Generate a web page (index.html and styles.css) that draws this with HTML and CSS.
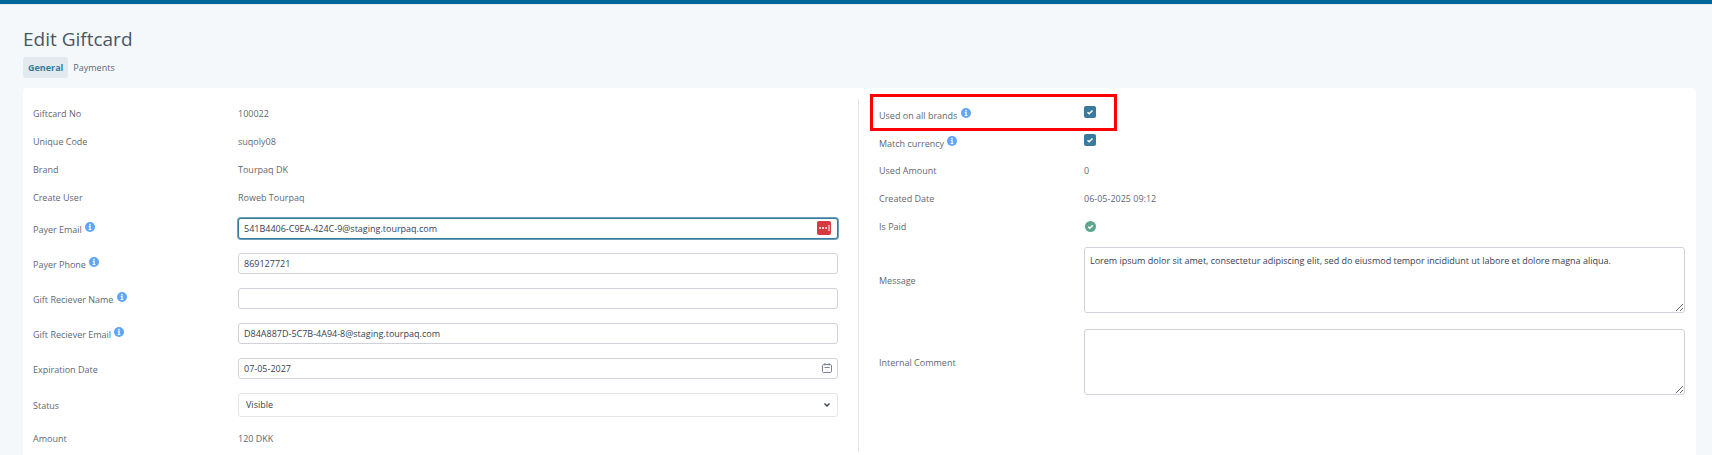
FILE: index.html
```html
<!DOCTYPE html>
<html lang="en">
<head>
<meta charset="utf-8">
<title>Edit Giftcard</title>
<link rel="stylesheet" href="styles.css">
</head>
<body>
<svg class="sprite" aria-hidden="true">
  <symbol id="info" viewBox="0 0 20 20">
    <circle cx="10" cy="10" r="10" fill="#60a5fa"/>
    <circle cx="10" cy="5.4" r="1.7" fill="#fff"/>
    <path d="M7.5 8.2h3.9v5.6h1.4v2H7.3v-2h1.6v-3.6H7.5z" fill="#fff"/>
  </symbol>
</svg>
<div class="topbar"></div>
<main class="page">
  <h1 class="title">Edit Giftcard</h1>
  <nav class="tabs">
    <a class="tab tab-active" href="#general">General</a>
    <a class="tab" href="#payments">Payments</a>
  </nav>
  <form class="card">
    <section class="column column-left">
      <div class="row"><span class="label">Giftcard No</span><span class="value">100022</span></div>
      <div class="row"><span class="label">Unique Code</span><span class="value">suqoly08</span></div>
      <div class="row"><span class="label">Brand</span><span class="value">Tourpaq DK</span></div>
      <div class="row"><span class="label">Create User</span><span class="value">Roweb Tourpaq</span></div>
      <div class="row row-field">
        <label class="label" for="email">Payer Email <svg class="info"><use href="#info"/></svg></label>
        <div class="field">
          <input class="input input-focused" id="email" type="text" value="541B4406-C9EA-424C-9@staging.tourpaq.com">
          <svg class="manager" viewBox="0 0 14 14" aria-hidden="true"><rect width="14" height="14" rx="2" fill="#d63a3e"/><circle cx="3" cy="7" r="1" fill="#fff"/><circle cx="6" cy="7" r="1" fill="#fff"/><circle cx="9" cy="7" r="1" fill="#fff"/><path d="M12 4v6" stroke="#fff"/></svg>
        </div>
      </div>
      <div class="row row-field">
        <label class="label" for="phone">Payer Phone <svg class="info"><use href="#info"/></svg></label>
        <div class="field"><input class="input" id="phone" type="text" value="869127721"></div>
      </div>
      <div class="row row-field">
        <label class="label" for="rname">Gift Reciever Name <svg class="info"><use href="#info"/></svg></label>
        <div class="field"><input class="input" id="rname" type="text"></div>
      </div>
      <div class="row row-field">
        <label class="label" for="remail">Gift Reciever Email <svg class="info"><use href="#info"/></svg></label>
        <div class="field"><input class="input" id="remail" type="text" value="D84A887D-5C7B-4A94-8@staging.tourpaq.com"></div>
      </div>
      <div class="row row-field">
        <label class="label" for="expires">Expiration Date</label>
        <div class="field">
          <input class="input" id="expires" type="text" value="07-05-2027">
          <svg class="calendar" viewBox="0 0 10 10" aria-hidden="true"><rect x=".5" y="1.5" width="9" height="8" rx="1.2" fill="none" stroke="#7b8490"/><path d="M3 0v2.5M7 0v2.5M2.5 4.5h5" stroke="#7b8490" fill="none"/></svg>
        </div>
      </div>
      <div class="row row-field">
        <label class="label" for="status">Status</label>
        <div class="field">
          <select class="input select" id="status"><option>Visible</option></select>
          <svg class="chevron" viewBox="0 0 8 6" aria-hidden="true"><path d="M1.5 1.5 4 4l2.500-2.500" fill="none" stroke="#374151" stroke-width="1.400"/></svg>
        </div>
      </div>
      <div class="row"><span class="label">Amount</span><span class="value">120 DKK</span></div>
    </section>
    <section class="column column-right">
      <div class="row highlighted">
        <label class="label" for="brands">Used on all brands <svg class="info"><use href="#info"/></svg></label>
        <input class="check" id="brands" type="checkbox" checked>
      </div>
      <div class="row">
        <label class="label" for="currency">Match currency <svg class="info"><use href="#info"/></svg></label>
        <input class="check" id="currency" type="checkbox" checked>
      </div>
      <div class="row"><span class="label">Used Amount</span><span class="value">0</span></div>
      <div class="row"><span class="label">Created Date</span><span class="value">06-05-2025 09:12</span></div>
      <div class="row"><span class="label">Is Paid</span>
        <svg class="paid" viewBox="0 0 11 11" role="img" aria-label="Yes"><circle cx="5.500" cy="5.500" r="5.500" fill="#5fa78c"/><path d="M3.200 5.700l1.600 1.500 3-3" fill="none" stroke="#fff" stroke-width="1.400"/></svg>
      </div>
      <div class="row row-area">
        <label class="label" for="message">Message</label>
        <textarea class="input area" id="message">Lorem ipsum dolor sit amet, consectetur adipiscing elit, sed do eiusmod tempor incididunt ut labore et dolore magna aliqua.</textarea>
      </div>
      <div class="row row-area">
        <label class="label" for="comment">Internal Comment</label>
        <textarea class="input area" id="comment"></textarea>
      </div>
    </section>
  </form>
</main>
</body>
</html>
```
FILE: styles.css
```css
*, *::after { box-sizing: border-box; }
body {
  margin: 0;
  background: #f4f8fb;
  color: #5f6774;
  font: 9px/14px "Open Sans", "Noto Sans", sans-serif;
}
.sprite { display: none; }
.topbar { height: 5px; background: #00669a; border-bottom: 1px solid #e3e9ee; }
.page { padding: 20px 16px 0 23px; }
.title { margin: 0; color: #4b5563; font-size: 19px; line-height: 28px; font-weight: 400; }
.tabs { display: flex; margin: 4px 0 10px; }
.tab { padding: 4px 5px 3px; border-radius: 3px; color: #5b6673; font-weight: 500; text-decoration: none; }
.tab-active { background: #e2eaf0; color: #3a7a9c; font-weight: 700; }
.card {
  display: grid;
  grid-template-columns: 1fr 1fr;
  padding: 11px 11px 3px 10px;
  background: #fff;
  border-radius: 4px 4px 0 0;
}
.column { min-width: 0; }
.column-left { padding-right: 20px; border-right: 1px solid #e5e7eb; }
.column-right { padding: 1px 0 0 20px; }
.row { display: flex; align-items: center; min-height: 28px; }
.row-field { padding: 7px 0; }
.row-area { padding: 7px 0 9px; }
.label, .value { padding-top: 2px; }
.label { flex: 0 0 205px; font-weight: 500; }
.field { position: relative; display: flex; flex: 1; }
.info { width: 10px; height: 10px; margin-left: 1px; vertical-align: 1px; }
.input {
  flex: 1;
  width: 100%;
  min-width: 0;
  height: 21px;
  margin: 0;
  padding: 0 5px;
  border: 1px solid #d1d1db;
  border-radius: 3px;
  background: #fff;
  color: #374151;
  font: inherit;
  outline: none;
}
.input-focused { border-color: #3a7a9c; box-shadow: 0 0 0 1px #6fa0b8; }
.select { height: 24px; padding: 0 7px; border-color: #e5e7eb; appearance: none; }
.area { height: 66px; padding: 6px 5px; resize: vertical; }
.manager { position: absolute; right: 7px; top: 3px; width: 14px; height: 14px; }
.calendar { position: absolute; right: 6px; top: 5px; width: 10px; height: 10px; }
.chevron { position: absolute; right: 7px; top: 9px; width: 8px; height: 6px; }
.check {
  width: 12px;
  height: 12px;
  margin: 0 0 4px;
  border-radius: 2px;
  appearance: none;
  background: #3a7a9c url("data:image/svg+xml,%3Csvg xmlns='http://www.w3.org/2000/svg' viewBox='0 0 12 12'%3E%3Cpath d='M3.500 6.200l1.700 1.600 3.300-3.300' fill='none' stroke='%23fff' stroke-width='1.500'/%3E%3C/svg%3E");
}
.paid { width: 11px; height: 11px; margin-left: 1px; }
.highlighted { position: relative; }
.highlighted::after {
  content: "";
  position: absolute;
  left: -9px;
  top: -6px;
  width: 247px;
  height: 37px;
  border: 3px solid #f00;
  pointer-events: none;
}
```
